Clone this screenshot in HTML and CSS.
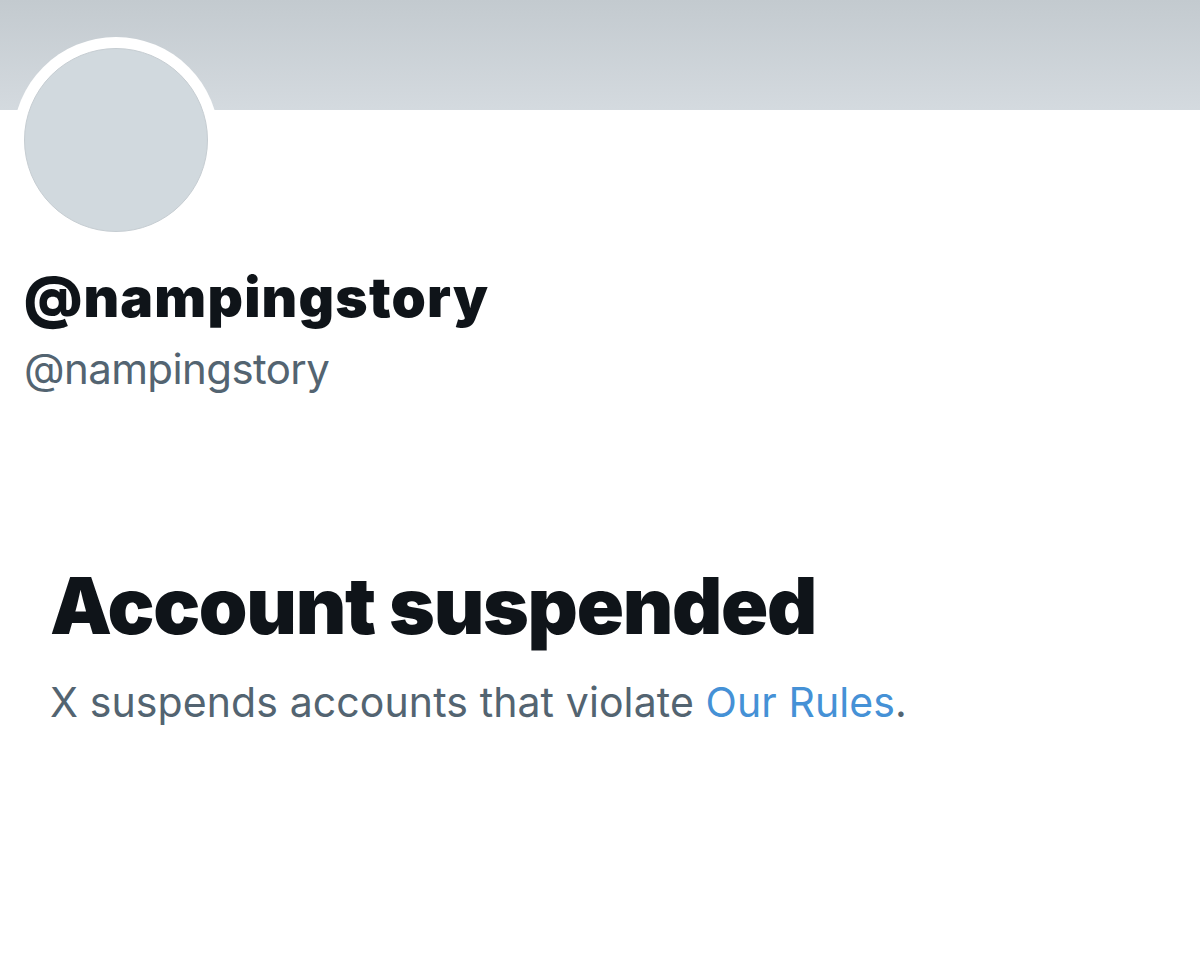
FILE: index.html
```html
<!DOCTYPE html>
<html>
<head>
<meta charset="utf-8">
<link rel="stylesheet" href="styles.css">
</head>
<body>
<div class="banner"></div>
<div class="profile">
  <div class="avatar"><div class="avatar-inner"></div></div>
  <div class="name">@nampingstory</div>
  <div class="handle">@nampingstory</div>
</div>
<div class="suspended">
  <h1 class="title">Account suspended</h1>
  <p class="desc">X suspends accounts that violate <a class="link" href="#">Our Rules</a>.</p>
</div>
</body>
</html>
```
FILE: styles.css
```css
html, body {
  margin: 0;
  padding: 0;
  background: #ffffff;
  font-family: Inter, "Liberation Sans", sans-serif;
}
.banner {
  height: 110px;
  background: linear-gradient(180deg, #c3cacf 0%, #d4dadf 100%);
}
.profile {
  padding-left: 13px;
}
.avatar {
  width: 206px;
  height: 206px;
  margin-top: -73px;
  border-radius: 50%;
  background: #ffffff;
  display: flex;
  align-items: center;
  justify-content: center;
}
.avatar-inner {
  width: 182px;
  height: 182px;
  border-radius: 50%;
  background: #d1d9de;
  border: 1px solid #c6cdd2;
}
.name {
  margin-left: 11px;
  margin-top: 24px;
  font-size: 55px;
  font-weight: 900;
  line-height: 60px;
  color: #0f1419;
  letter-spacing: 1.2px;
}
.handle {
  margin-left: 11px;
  margin-top: 17px;
  font-size: 42px;
  font-weight: 400;
  line-height: 50px;
  color: #536471;
  letter-spacing: -0.6px;
}
.suspended {
  padding-left: 50px;
  margin-top: 167px;
}
.title {
  margin: 0;
  font-size: 78px;
  font-weight: 900;
  line-height: 90px;
  color: #0f1419;
  letter-spacing: -1.3px;
}
.desc {
  margin: 26px 0 0 0;
  font-size: 41px;
  line-height: 50px;
  color: #536471;
  letter-spacing: 0.1px;
}
.link {
  color: #4591d6;
  text-decoration: none;
}
```
